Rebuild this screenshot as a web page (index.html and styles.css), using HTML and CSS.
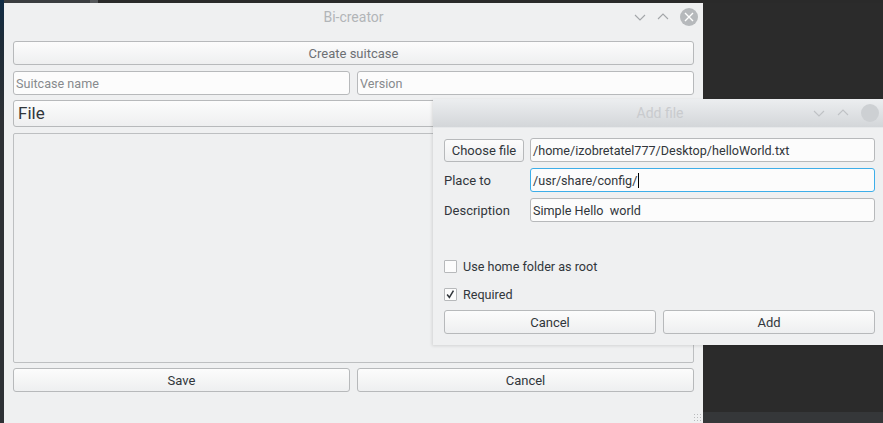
FILE: index.html
```html
<!DOCTYPE html>
<html>
<head>
<meta charset="utf-8">
<link rel="stylesheet" href="styles.css">
</head>
<body>
<div class="desktop">
  <div class="topstrip"><span class="ts-a"></span><span class="ts-b"></span></div>
  <div class="leftstrip"></div>
  <div class="bottomstrip"></div>

  <div class="window main">
    <div class="titlebar">
      <span class="title">Bi-creator</span>
      <div class="tb-buttons">
        <svg class="chev" width="14" height="10" viewBox="0 0 14 10"><path d="M2 3 L7 8 L12 3" fill="none" stroke="#a3a6a9" stroke-width="1.1"/></svg>
        <svg class="chev" width="14" height="10" viewBox="0 0 14 10"><path d="M2 7 L7 2 L12 7" fill="none" stroke="#a3a6a9" stroke-width="1.1"/></svg>
        <svg class="close" width="18" height="18" viewBox="0 0 18 18"><circle cx="9" cy="9" r="9" fill="#b6b9bc"/><path d="M5 5 L13 13 M13 5 L5 13" stroke="#fff" stroke-width="1.4"/></svg>
      </div>
    </div>
    <div class="content">
      <button class="btn btn-wide muted">Create suitcase</button>
      <div class="row2">
        <input class="field" placeholder="Suitcase name">
        <input class="field" placeholder="Version">
      </div>
      <div class="combo">File</div>
      <div class="listbox"></div>
      <div class="row2">
        <button class="btn">Save</button>
        <button class="btn">Cancel</button>
      </div>
    </div>
    <div class="grip"></div>
  </div>

  <div class="window dialog">
    <div class="titlebar dtitle">
      <span class="title faded">Add file</span>
      <div class="tb-buttons">
        <svg class="chev" width="14" height="10" viewBox="0 0 14 10"><path d="M2 3 L7 8 L12 3" fill="none" stroke="#bfc2c5" stroke-width="1.1"/></svg>
        <svg class="chev" width="14" height="10" viewBox="0 0 14 10"><path d="M2 7 L7 2 L12 7" fill="none" stroke="#bfc2c5" stroke-width="1.1"/></svg>
        <svg class="close" width="18" height="18" viewBox="0 0 18 18"><circle cx="9" cy="9" r="9" fill="#cdd0d3"/></svg>
      </div>
    </div>
    <div class="dcontent">
      <div class="form">
        <button class="btn choose">Choose file</button>
        <div class="field val">/home/izobretatel777/Desktop/helloWorld.txt</div>
        <label class="lbl">Place to</label>
        <div class="field val focus">/usr/share/config/<span class="caret"></span></div>
        <label class="lbl">Description</label>
        <div class="field val">Simple Hello&nbsp; world</div>
      </div>
      <div class="checks">
        <div class="check"><span class="box"></span>Use home folder as root</div>
        <div class="check"><span class="box"><svg width="13" height="13" viewBox="0 0 13 13"><path d="M2.5 6.5 L5.2 10 L10 2" fill="none" stroke="#31363b" stroke-width="1.8"/></svg></span>Required</div>
      </div>
      <div class="drow">
        <button class="btn">Cancel</button>
        <button class="btn">Add</button>
      </div>
    </div>
  </div>
</div>
</body>
</html>
```

FILE: styles.css
```css
* { box-sizing: border-box; }
html, body { margin: 0; padding: 0; }
body {
  width: 883px;
  height: 423px;
  overflow: hidden;
  background: #2b2b2b;
  font-family: Roboto, "Noto Sans", sans-serif;
  font-size: 13px;
  color: #31363b;
}
.desktop { position: relative; width: 883px; height: 423px; }
.topstrip { position: absolute; left: 0; top: 0; width: 883px; height: 3px; display: flex; background: #2a2a2a; }
.ts-a { width: 90px; background: #3a3d40; }
.ts-b { width: 8px; background: #55585b; }
.leftstrip { position: absolute; left: 0; top: 0; width: 4px; height: 423px; background: linear-gradient(#0f2b45 0, #1d2b38 40px, #2e3135 120px); }
.bottomstrip { position: absolute; left: 703px; top: 412px; width: 180px; height: 11px; background: #353739; }

.window { position: absolute; background: #eff0f1; display: flex; flex-direction: column; }
.main { left: 4px; top: 3px; width: 699px; height: 420px; }
.dialog { left: 433px; top: 99px; width: 450px; height: 246px; box-shadow: -1px 1px 3px rgba(0,0,0,0.12); }

.titlebar { height: 28px; position: relative; display: flex; align-items: center; justify-content: center; flex: none; }
.title { font-size: 14px; color: #b2b5b8; }
.dtitle { height: 29px; background: linear-gradient(#eceef0, #d3d6d9); border-bottom: 1px solid #e6e8ea; }
.faded { color: #c9cbce; font-size: 14px; margin-left: 4px; }
.tb-buttons { position: absolute; right: 5px; top: 0; height: 100%; display: flex; align-items: center; gap: 9px; }
.dialog .tb-buttons { right: 4px; gap: 10px; }
.chev { display: block; }
.close { display: block; margin-left: 1px; }

.content { flex: 1; display: flex; flex-direction: column; padding: 10px 9px 0 9px; }
.btn {
  font-family: inherit; font-size: 13px; color: #31363b;
  height: 24px; border: 1px solid #b7b9bb; border-radius: 3px;
  background: linear-gradient(#fcfcfc, #eeeff0);
  padding: 0; margin: 0;
}
.btn-wide { width: 100%; }
.muted { color: #6d7074; }
.row2 { display: grid; grid-template-columns: 1fr 1fr; gap: 7px; margin-top: 6px; }
.row2 .btn { height: 24px; }
.field {
  height: 24px; border: 1px solid #b7b9bb; border-radius: 3px; background: #fcfcfc;
  font-family: inherit; font-size: 12.6px; color: #31363b; padding: 0 2px; outline: none; width: 100%;
}
.field::placeholder { color: #878a8d; }
.combo {
  margin-top: 5px; height: 27px; border: 1px solid #b7b9bb; border-radius: 3px;
  background: linear-gradient(#fcfcfc, #eeeff0);
  font-size: 17px; line-height: 25px; padding-left: 4px; color: #31363b;
}
.listbox { margin-top: 6px; height: 230px; border: 1px solid #bdbfc1; border-radius: 2px; background: #eff0f1; }
.listbox + .row2 { margin-top: 5px; }

.grip { position: absolute; right: 2px; bottom: 2px; width: 8px; height: 8px;
  background-image: radial-gradient(circle, #b9bbbd 0.7px, transparent 0.8px); background-size: 3px 3px; }

.dcontent { flex: 1; padding: 10px 8px 0 11px; display: flex; flex-direction: column; }
.form { display: grid; grid-template-columns: 86px 1fr; row-gap: 6px; align-items: center; }
.choose { width: 80px; height: 23px; }
.val { display: flex; align-items: center; height: 24px; padding-left: 2px; }
.focus { border-color: #3daee9; }
.caret { display: inline-block; width: 1px; height: 15px; background: #000; margin-left: 1px; }
.lbl { font-size: 13px; }
.checks { margin-top: 37px; display: flex; flex-direction: column; gap: 14px; }
.check { display: flex; align-items: center; height: 14px; font-size: 12.6px; }
.box { width: 13px; height: 13px; border: 1px solid #b7b9bb; background: #fcfcfc; border-radius: 1px; margin-right: 6px; display: flex; align-items: center; justify-content: center; }
.box svg { display: block; }
.drow { display: grid; grid-template-columns: 1fr 1fr; gap: 7px; margin-top: 9px; }
.drow .btn { height: 24px; }
```
